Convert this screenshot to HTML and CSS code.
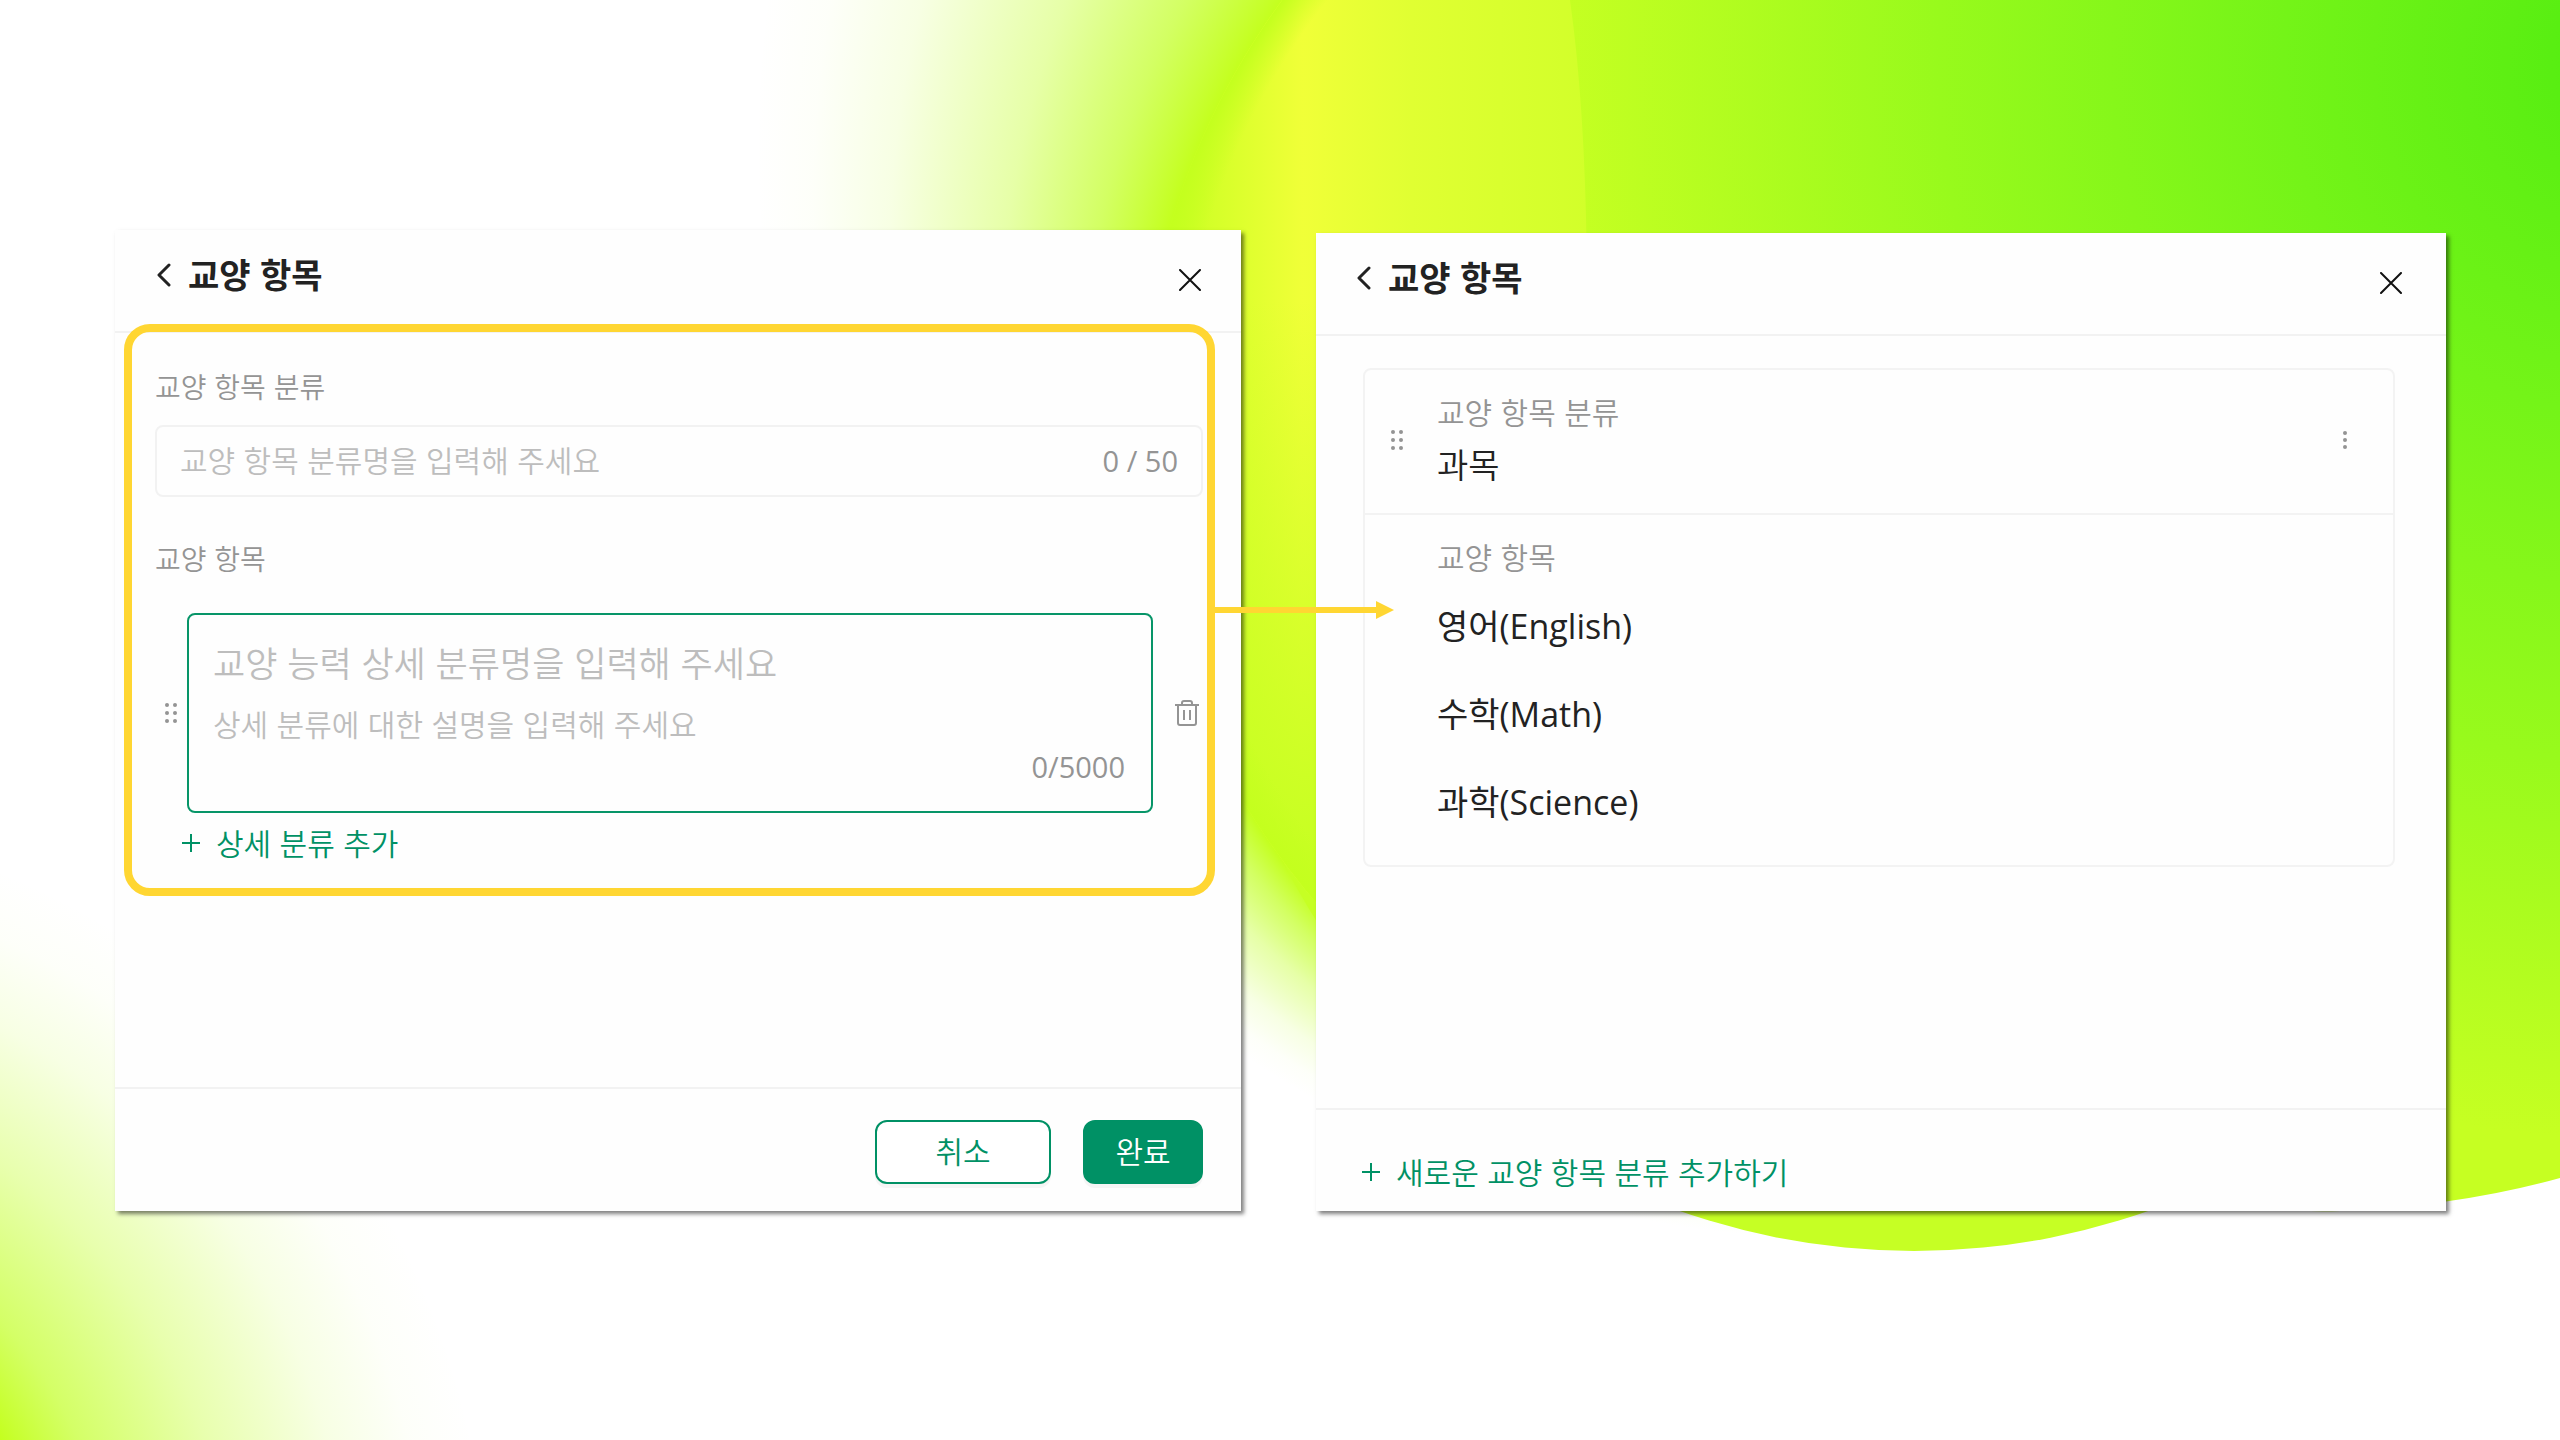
FILE: index.html
```html
<!DOCTYPE html>
<html lang="ko">
<head>
    <meta charset="UTF-8">
    <meta name="viewport" content="width=device-width, initial-scale=1.0">
    <title>교양 항목</title>
    <link rel="stylesheet" href="styles.css">
</head>
<body>

    <!-- Background -->
    <svg class="backdrop" viewBox="0 0 2560 1440" preserveAspectRatio="xMidYMid slice" aria-hidden="true">
        <defs>
            <radialGradient id="glow" gradientUnits="userSpaceOnUse" cx="1850" cy="145" r="1095" fx="1866" fy="430" fr="725">
                <stop offset="0" stop-color="#c4ff1e"/>
                <stop offset="0.15" stop-color="#c8ff3c" stop-opacity="0.8"/>
                <stop offset="0.36" stop-color="#c8ff3c" stop-opacity="0.45"/>
                <stop offset="0.65" stop-color="#c8ff3c" stop-opacity="0.14"/>
                <stop offset="0.85" stop-color="#c8ff3c" stop-opacity="0.03"/>
                <stop offset="1" stop-color="#c8ff3c" stop-opacity="0"/>
            </radialGradient>
            <radialGradient id="corner" gradientUnits="userSpaceOnUse" cx="-300" cy="1600" r="790">
                <stop offset="0.43" stop-color="#c4ff1e"/>
                <stop offset="0.52" stop-color="#c8ff3c" stop-opacity="0.78"/>
                <stop offset="0.67" stop-color="#c8ff3c" stop-opacity="0.42"/>
                <stop offset="0.82" stop-color="#c8ff3c" stop-opacity="0.14"/>
                <stop offset="0.92" stop-color="#c8ff3c" stop-opacity="0.03"/>
                <stop offset="1" stop-color="#c8ff3c" stop-opacity="0"/>
            </radialGradient>
            <linearGradient id="yellow" gradientUnits="userSpaceOnUse" x1="1150" y1="0" x2="1587" y2="0">
                <stop offset="0" stop-color="#c2ff1e"/>
                <stop offset="0.35" stop-color="#f0ff38"/>
                <stop offset="0.6" stop-color="#e0ff32"/>
                <stop offset="1" stop-color="#d2ff2a"/>
            </linearGradient>
            <linearGradient id="lime" gradientUnits="userSpaceOnUse" x1="0" y1="300" x2="0" y2="900">
                <stop offset="0" stop-color="#c4ff20" stop-opacity="0"/>
                <stop offset="1" stop-color="#c4ff20"/>
            </linearGradient>
            <radialGradient id="rim" gradientUnits="userSpaceOnUse" cx="1866" cy="430" r="725">
                <stop offset="0.95" stop-color="#c4ff1e" stop-opacity="0"/>
                <stop offset="1" stop-color="#c4ff1e"/>
            </radialGradient>
            <radialGradient id="green" gradientUnits="userSpaceOnUse" cx="2640" cy="60" r="1080">
                <stop offset="0" stop-color="#50ec10"/>
                <stop offset="0.33" stop-color="#74f418"/>
                <stop offset="0.65" stop-color="#98fa1c"/>
                <stop offset="1" stop-color="#c6ff22"/>
            </radialGradient>
        </defs>
        <rect width="2560" height="1440" fill="#fff"/>
        <circle cx="1850" cy="145" r="1095" fill="url(#glow)"/>
        <circle cx="1914" cy="545" r="706" fill="#c6ff24" clip-path="inset(600px 0 0 0)"/>
        <circle cx="1866" cy="430" r="725" fill="url(#yellow)"/>
        <circle cx="1866" cy="430" r="725" fill="url(#lime)"/>
        <circle cx="1866" cy="430" r="725" fill="url(#rim)"/>
        <path d="M1570 0Q1587 120 1587 300A753 753 0 0 0 2340 1211Q2460 1206 2560 1178V0Z" fill="url(#green)"/>
        <rect width="700" height="1440" fill="url(#corner)"/>
    </svg>

    <main class="slide">

        <!-- Edit panel -->
        <section class="panel">
            <header class="panel-header">
                <button type="button" class="icon-btn" aria-label="뒤로">
                    <svg width="14" height="24" viewBox="0 0 14 24"><path class="chevron" d="M12 2L2 12L12 22"/></svg>
                </button>
                <h1>교양 항목</h1>
                <button type="button" class="icon-btn close" aria-label="닫기">
                    <svg width="22" height="22" viewBox="0 0 22 22"><path class="cross" d="M1 1L21 21M21 1L1 21"/></svg>
                </button>
            </header>

            <form class="highlight">
                <label for="category">교양 항목 분류</label>
                <div class="field">
                    <input type="text" id="category" placeholder="교양 항목 분류명을 입력해 주세요">
                    <span class="count">0 / 50</span>
                </div>

                <label for="item-name">교양 항목</label>
                <div class="item-row">
                    <svg class="grip" width="12" height="20" viewBox="0 0 12 20"><g><circle cx="2" cy="2" r="2"/><circle cx="10" cy="2" r="2"/><circle cx="2" cy="10" r="2"/><circle cx="10" cy="10" r="2"/><circle cx="2" cy="18" r="2"/><circle cx="10" cy="18" r="2"/></g></svg>
                    <div class="item-box">
                        <input type="text" id="item-name" placeholder="교양 능력 상세 분류명을 입력해 주세요">
                        <textarea rows="1" aria-label="설명" placeholder="상세 분류에 대한 설명을 입력해 주세요"></textarea>
                        <span class="count">0/5000</span>
                    </div>
                    <button type="button" class="icon-btn trash" aria-label="삭제">
                        <svg width="24" height="26" viewBox="0 0 24 26"><path d="M0 5H24M7 5V3Q7 1 9 1H15Q17 1 17 3V5M3 5V23Q3 25 5 25H19Q21 25 21 23V5M9 10V20M15 10V20"/></svg>
                    </button>
                </div>
                <button type="button" class="add-btn">
                    <svg width="18" height="18" viewBox="0 0 18 18"><path d="M9 0V18M0 9H18"/></svg>
                    <span>상세 분류 추가</span>
                </button>

                <svg class="arrow" width="179" height="18" viewBox="0 0 179 18" aria-hidden="true"><path d="M0 6H161V0L179 9L161 18V12H0Z"/></svg>
            </form>

            <footer class="actions">
                <button type="button" class="btn cancel">취소</button>
                <button type="submit" class="btn done">완료</button>
            </footer>
        </section>

        <!-- Result panel -->
        <section class="panel result">
            <header class="panel-header">
                <button type="button" class="icon-btn" aria-label="뒤로">
                    <svg width="14" height="24" viewBox="0 0 14 24"><path class="chevron" d="M12 2L2 12L12 22"/></svg>
                </button>
                <h1>교양 항목</h1>
                <button type="button" class="icon-btn close" aria-label="닫기">
                    <svg width="22" height="22" viewBox="0 0 22 22"><path class="cross" d="M1 1L21 21M21 1L1 21"/></svg>
                </button>
            </header>

            <div class="card">
                <div class="card-head">
                    <svg class="grip" width="12" height="20" viewBox="0 0 12 20"><g><circle cx="2" cy="2" r="2"/><circle cx="10" cy="2" r="2"/><circle cx="2" cy="10" r="2"/><circle cx="10" cy="10" r="2"/><circle cx="2" cy="18" r="2"/><circle cx="10" cy="18" r="2"/></g></svg>
                    <div class="card-title">
                        <p class="caption">교양 항목 분류</p>
                        <h2>과목</h2>
                    </div>
                    <button type="button" class="icon-btn" aria-label="더보기">
                        <svg width="4" height="18" viewBox="0 0 4 18"><g><circle cx="2" cy="2" r="2"/><circle cx="2" cy="9" r="2"/><circle cx="2" cy="16" r="2"/></g></svg>
                    </button>
                </div>
                <div class="card-body">
                    <p class="caption">교양 항목</p>
                    <ul>
                        <li>영어(English)</li>
                        <li>수학(Math)</li>
                        <li>과학(Science)</li>
                    </ul>
                </div>
            </div>

            <footer class="add-footer">
                <button type="button" class="add-btn">
                    <svg width="18" height="18" viewBox="0 0 18 18"><path d="M9 0V18M0 9H18"/></svg>
                    <span>새로운 교양 항목 분류 추가하기</span>
                </button>
            </footer>
        </section>

    </main>

</body>
</html>
```
FILE: styles.css
```css
/* General Styles */
* {
    box-sizing: border-box;
}

body {
    font-family: "Noto Sans CJK KR", "Noto Sans", sans-serif;
    font-weight: 350;
    margin: 0;
    color: #222;
    background: #fff;
}

h1, h2, p, ul {
    margin: 0;
    padding: 0;
}

button, input, textarea {
    font-family: inherit;
    font-weight: inherit;
    margin: 0;
    padding: 0;
    border: none;
    background: none;
    outline: none;
}

button {
    cursor: pointer;
}

svg {
    display: block;
    flex-shrink: 0;
}

.backdrop {
    position: absolute;
    top: 0;
    left: 0;
    width: 100%;
    height: 100%;
    z-index: -1;
}

.slide {
    display: grid;
    grid-template-columns: 1126fr 1130fr;
    gap: 75px;
    min-height: 100vh;
    padding: 230px 114px 229px 115px;
}

/* Panels */
.panel {
    display: flex;
    flex-direction: column;
    background: #fefefe;
    box-shadow: 3px 3px 4px rgba(0, 0, 0, 0.5);
}

.panel:first-child {
    position: relative;
    z-index: 1;
}

.result {
    margin-top: 3px;
}

.panel-header {
    display: flex;
    align-items: center;
    height: 103px;
    padding: 0 40px 2px 42px;
    border-bottom: 2px solid #f2f2f2;
}

.result .panel-header {
    padding: 0 44px 2px 41px;
}

.panel-header .icon-btn:first-child {
    padding-bottom: 10px;
}

.panel-header h1 {
    margin-left: 17px;
    padding-bottom: 12px;
    font-size: 34px;
    line-height: 50px;
}

.close {
    margin-left: auto;
}

.chevron {
    fill: none;
    stroke: #222;
    stroke-width: 3;
    stroke-linecap: round;
    stroke-linejoin: round;
}

.cross {
    fill: none;
    stroke: #111;
    stroke-width: 2;
    stroke-linecap: round;
}

/* Form */
.highlight {
    position: relative;
    margin: -9px 26px 0 9px;
    padding: 34px 4px 25px 23px;
    border: 8px solid #ffd632;
    border-radius: 26px;
}

.highlight label {
    display: block;
    font-size: 28px;
    line-height: 40px;
    color: #949494;
}

.field {
    display: flex;
    align-items: center;
    height: 72px;
    margin: 19px 0 41px;
    padding: 0 23px;
    border: 2px solid #f2f2f2;
    border-radius: 8px;
}

.field input {
    flex: 1;
    min-width: 0;
    padding-bottom: 4px;
    font-size: 30px;
    line-height: 40px;
}

::placeholder {
    color: #bdbdbd;
    opacity: 1;
}

.count {
    font-family: "Open Sans", sans-serif;
    font-size: 29px;
    font-weight: 400;
    line-height: 40px;
    color: #949494;
}

.item-row {
    display: flex;
    align-items: center;
    margin-top: 35px;
}

.item-row .grip {
    margin: 0 10px;
}

.grip, .icon-btn g {
    fill: #949494;
}

.item-box {
    display: flex;
    flex: 1;
    flex-direction: column;
    padding: 22px 26px 24px 24px;
    border: 2px solid #079568;
    border-radius: 8px;
}

.item-box input {
    height: 48px;
    font-size: 35px;
}

.item-box textarea {
    height: 40px;
    margin: 18px 0 4px;
    font-size: 30px;
    line-height: 40px;
    resize: none;
    overflow: hidden;
}

.item-box .count {
    align-self: flex-end;
}

.trash {
    padding: 0 4px 0 22px;
}

.trash path {
    fill: none;
    stroke: #949494;
    stroke-width: 2;
}

.add-btn {
    display: flex;
    align-items: center;
    gap: 16px;
    font-size: 30px;
    line-height: 40px;
    color: #009165;
}

.add-btn span {
    padding-bottom: 2px;
}

.add-btn path {
    stroke: #009165;
    stroke-width: 2;
}

.highlight .add-btn {
    margin: 9px 0 -1px 27px;
}

.arrow {
    position: absolute;
    top: 50%;
    left: 100%;
    margin: -9px 0 0 8px;
    fill: #ffd632;
}

/* Footers */
.actions,
.add-footer {
    display: flex;
    margin-top: auto;
    border-top: 2px solid #f2f2f2;
}

.actions {
    justify-content: flex-end;
    gap: 32px;
    padding: 31px 38px 27px;
}

.btn {
    height: 64px;
    padding-bottom: 4px;
    border: 2px solid #009165;
    border-radius: 12px;
    box-shadow: 0 4px 0 #f5f5f5;
    font-size: 30px;
    line-height: 40px;
}

.cancel {
    width: 176px;
    background: #fff;
    color: #009165;
}

.done {
    width: 120px;
    background: #009165;
    color: #fff;
}

.add-footer {
    padding: 41px 46px 18px;
}

/* Card */
.card {
    margin: 32px 51px 0 47px;
    border: 2px solid #f3f3f3;
    border-radius: 8px;
}

.card-head {
    display: flex;
    align-items: center;
    padding: 21px 46px 24px 26px;
    border-bottom: 2px solid #f3f3f3;
}

.card-title {
    flex: 1;
    margin-left: 34px;
}

.caption {
    font-size: 30px;
    line-height: 40px;
    color: #949494;
}

.card h2 {
    margin-top: 8px;
    font-size: 34px;
    font-weight: inherit;
    line-height: 50px;
}

.card-body {
    padding: 21px 46px 19px 72px;
}

.card ul {
    margin-top: 6px;
    list-style: none;
}

.card li {
    font-family: "Open Sans", "Noto Sans CJK KR", sans-serif;
    font-size: 34px;
    font-weight: 400;
    line-height: 88px;
}
```
